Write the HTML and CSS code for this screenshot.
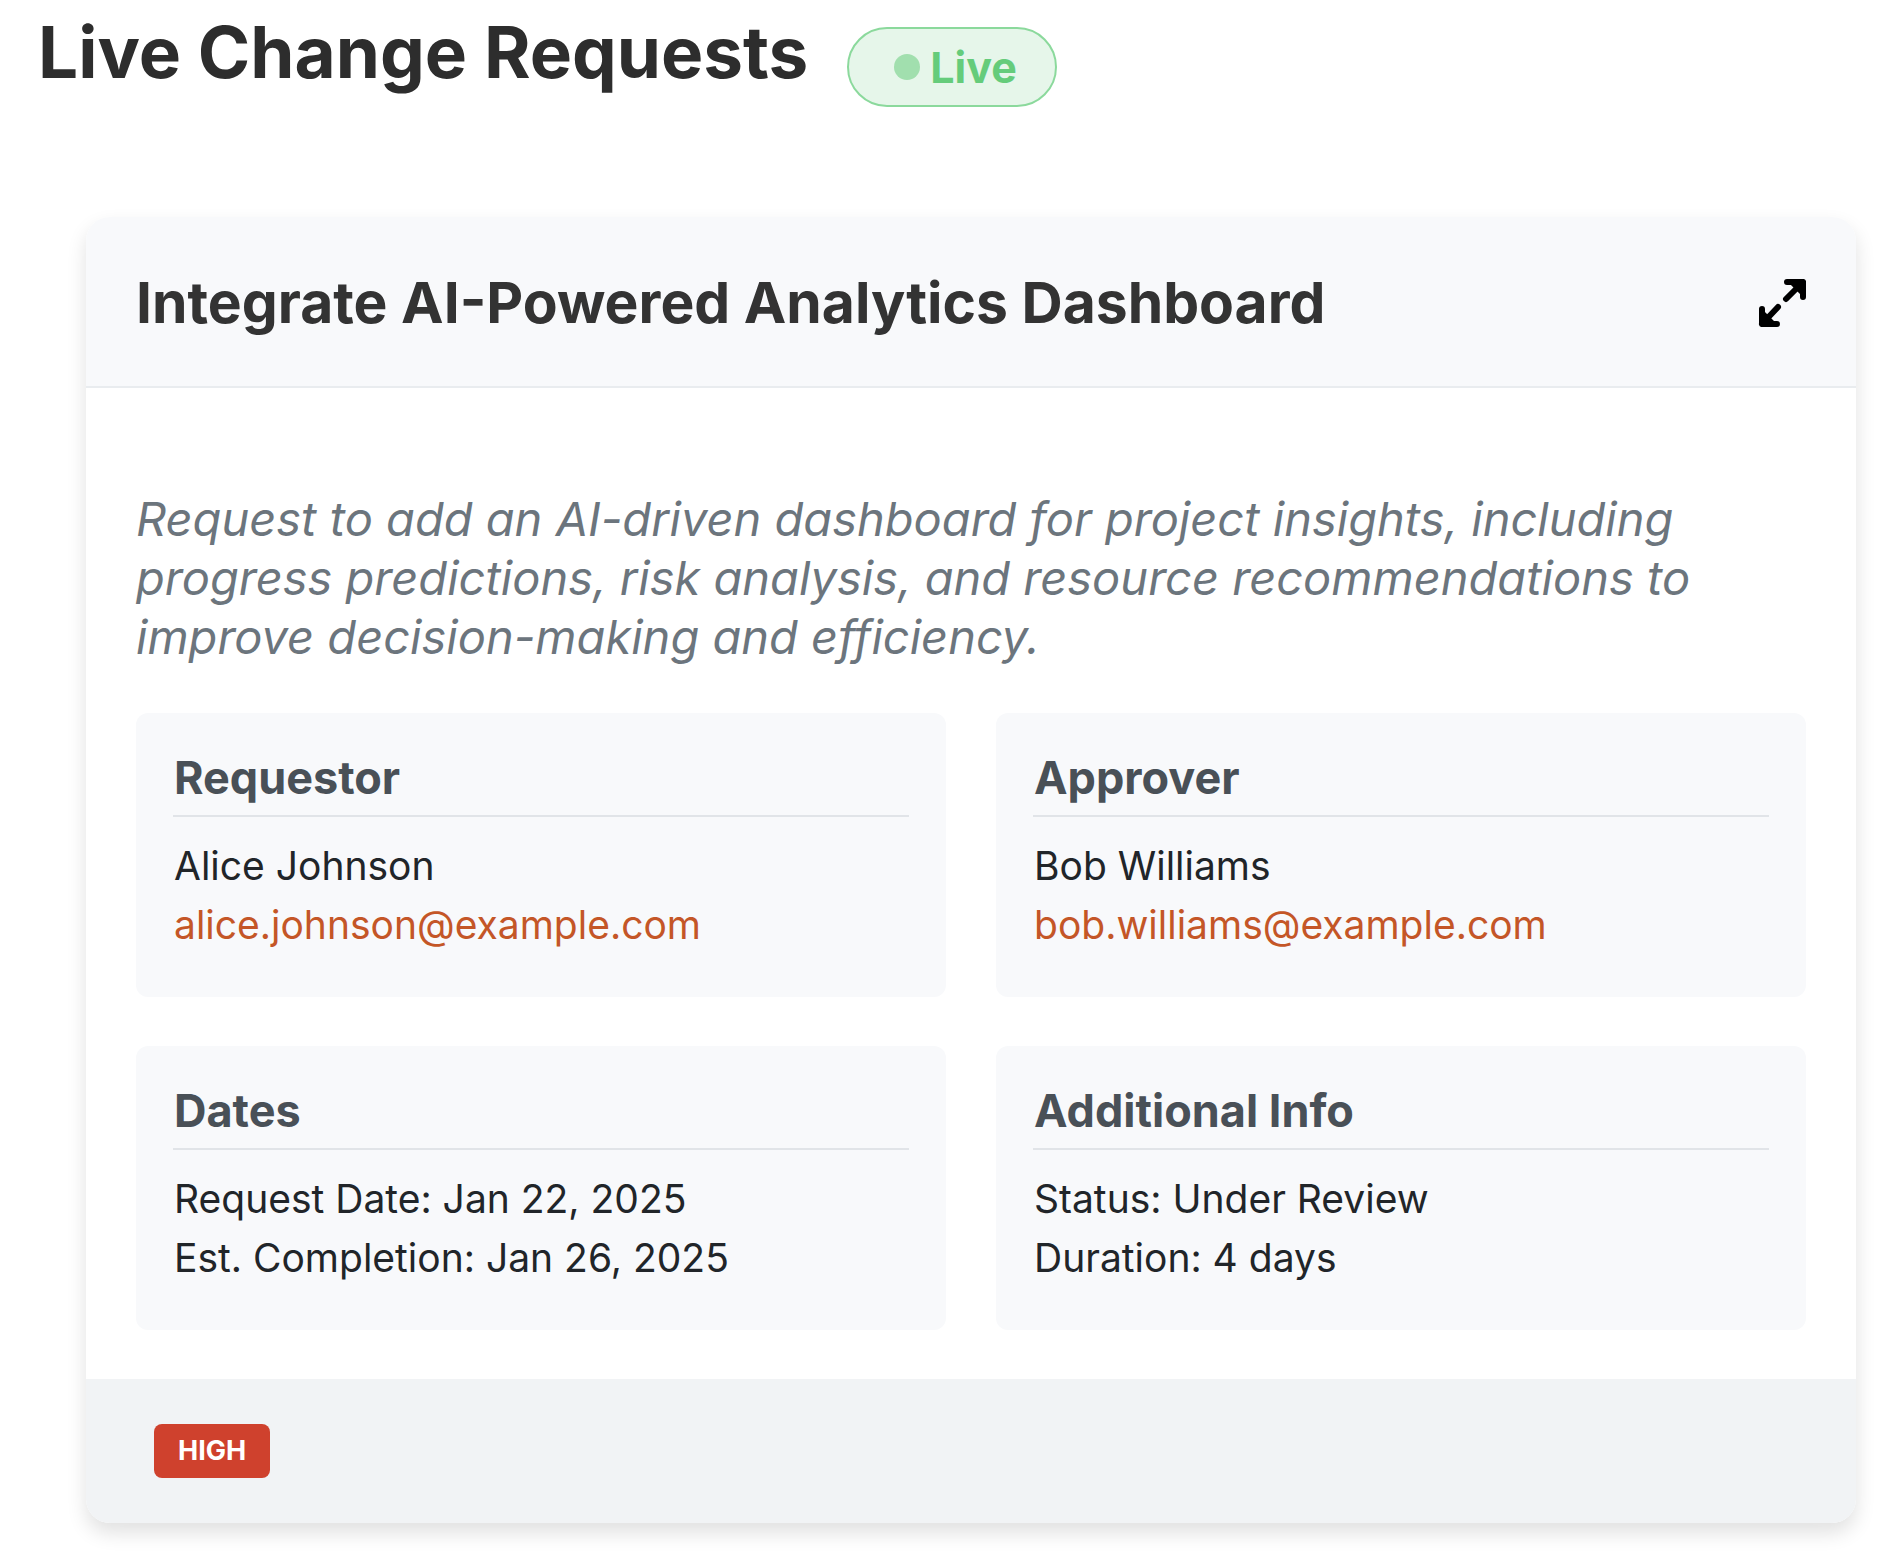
FILE: index.html
```html
<!DOCTYPE html>
<html lang="en">
<head>
  <meta charset="utf-8">
  <meta name="viewport" content="width=device-width, initial-scale=1">
  <title>Live Change Requests</title>
  <link rel="stylesheet" href="styles.css">
</head>
<body>
  <header class="page-header">
    <h1 class="page-title">Live Change Requests</h1>
    <span class="live-badge"><span class="live-dot"></span>Live</span>
  </header>
  <main class="requests">
    <article class="card">
      <header class="card-header">
        <h2 class="card-title">Integrate AI-Powered Analytics Dashboard</h2>
        <button class="expand" type="button" aria-label="Expand">
          <svg class="expand-icon" viewBox="0 0 48 48" aria-hidden="true">
            <path d="M29 3H45V18M28 20L45 3M19 45H4V30M20 28L4 45"/>
            <path class="expand-tip" d="M30 3H45V18ZM19 45H4V30Z"/>
          </svg>
        </button>
      </header>
      <div class="card-body">
        <p class="description">Request to add an AI-driven dashboard for project insights, including progress predictions, risk analysis, and resource recommendations to improve decision-making and efficiency.</p>
        <div class="details">
          <section class="detail">
            <h3 class="detail-title">Requestor</h3>
            <p class="detail-line">Alice Johnson</p>
            <p class="detail-line"><a class="email" href="mailto:alice.johnson@example.com">alice.johnson@example.com</a></p>
          </section>
          <section class="detail">
            <h3 class="detail-title">Approver</h3>
            <p class="detail-line">Bob Williams</p>
            <p class="detail-line"><a class="email" href="mailto:bob.williams@example.com">bob.williams@example.com</a></p>
          </section>
          <section class="detail">
            <h3 class="detail-title">Dates</h3>
            <p class="detail-line">Request Date: Jan 22, 2025</p>
            <p class="detail-line">Est. Completion: Jan 26, 2025</p>
          </section>
          <section class="detail">
            <h3 class="detail-title">Additional Info</h3>
            <p class="detail-line">Status: Under Review</p>
            <p class="detail-line">Duration: 4 days</p>
          </section>
        </div>
      </div>
      <footer class="card-footer">
        <span class="priority">HIGH</span>
      </footer>
    </article>
  </main>
</body>
</html>
```
FILE: styles.css
```css
* {
  box-sizing: border-box;
}

body {
  margin: 0;
  background: #fff;
  color: #212529;
  font-family: Inter, "Liberation Sans", sans-serif;
}

h1, h2, h3, p {
  margin: 0;
}

.page-header {
  display: flex;
  align-items: flex-start;
  gap: 39px;
  padding: 7px 38px 0;
}

.page-title {
  color: #2d2d2d;
  font-size: 71px;
  font-weight: 700;
  line-height: 90px;
}

.live-badge {
  display: flex;
  align-items: center;
  gap: 10px;
  height: 80px;
  margin-top: 20px;
  padding: 0 38px 0 45px;
  border: 2px solid #8bd99c;
  border-radius: 40px;
  background: #e6f6ea;
  color: #65cc7b;
  font-size: 43px;
  font-weight: 700;
}

.live-dot {
  width: 26px;
  height: 26px;
  border-radius: 50%;
  background: #a1dfae;
}

.requests {
  padding: 110px 30px 28px 86px;
}

.card {
  overflow: hidden;
  border-radius: 24px;
  background: #fff;
  box-shadow: 0 10px 20px rgba(0, 0, 0, 0.12);
}

.card-header {
  display: flex;
  align-items: center;
  justify-content: space-between;
  padding: 51px 50px 49px;
  border-bottom: 2px solid #e9ecef;
  background: #f8f9fb;
}

.card-title {
  color: #333;
  font-size: 57px;
  font-weight: 700;
  line-height: 69px;
}

.expand {
  display: flex;
  padding: 0;
  border: 0;
  background: none;
  cursor: pointer;
}

.expand-icon {
  width: 48px;
  height: 48px;
  fill: none;
  stroke: #000;
  stroke-width: 6px;
  stroke-linecap: round;
  stroke-linejoin: round;
}

.expand-tip {
  fill: #000;
  stroke: none;
}

.card-body {
  padding: 101px 50px 49px;
}

.description {
  margin-bottom: 47px;
  color: #6c757d;
  font-size: 47px;
  font-style: italic;
  line-height: 59px;
}

.details {
  display: grid;
  grid-template-columns: 1fr 1fr;
  gap: 49px 50px;
}

.detail {
  padding: 37px 37px 43px;
  border-radius: 12px;
  background: #f8f9fb;
}

.detail-title {
  margin-bottom: 19px;
  padding: 0 1px 9px;
  border-bottom: 2px solid #e1e4e8;
  color: #495057;
  font-size: 45px;
  font-weight: 700;
  line-height: 56px;
}

.detail-line {
  padding: 0 1px;
  font-size: 39px;
  line-height: 59px;
}

.email {
  color: #c45627;
  text-decoration: none;
}

.card-footer {
  display: flex;
  padding: 45px 68px;
  background: #f1f3f5;
}

.priority {
  padding: 0 24px;
  border-radius: 8px;
  background: #cf412d;
  color: #fff;
  font-size: 27px;
  font-weight: 700;
  line-height: 54px;
}
```
